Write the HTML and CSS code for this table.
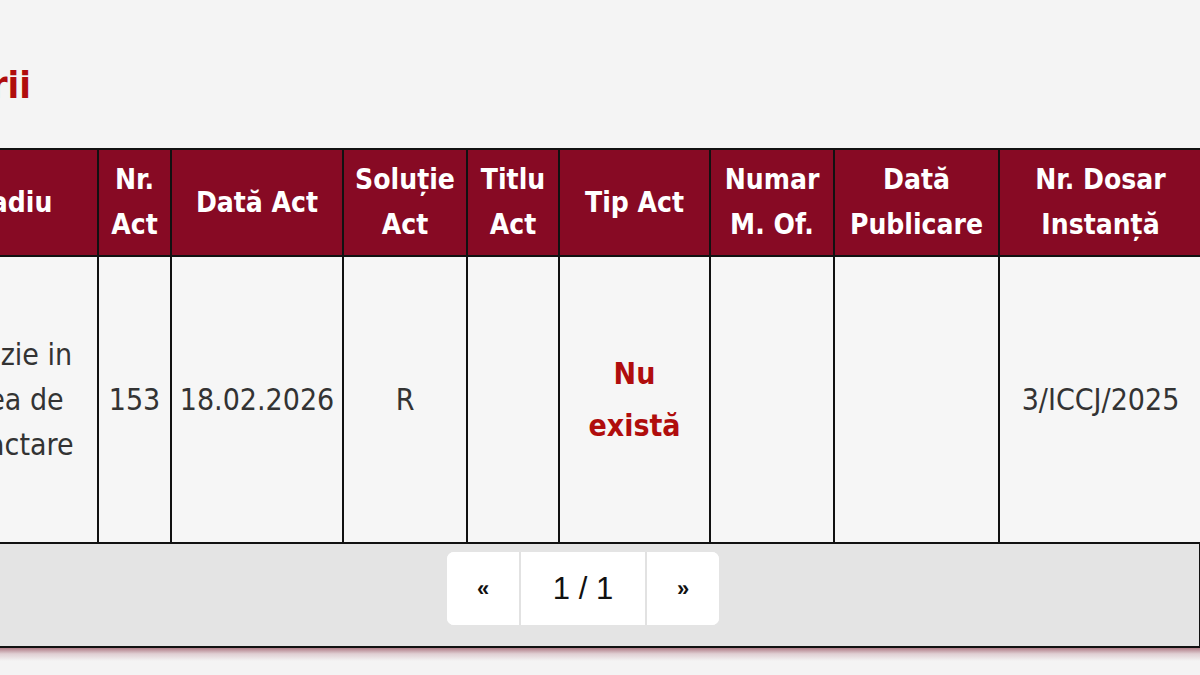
FILE: index.html
```html
<!DOCTYPE html>
<html lang="ro">
<head>
<meta charset="utf-8">
<title>Stadiul sesizării</title>
<link rel="stylesheet" href="styles.css">
</head>
<body>
<div class="page">
  <div class="title-wrap"><h2 class="title">Stadiul sesizării</h2></div>
  <div class="panel">
    <table class="acts">
      <colgroup>
        <col class="c1"><col class="c2"><col class="c3"><col class="c4"><col class="c5">
        <col class="c6"><col class="c7"><col class="c8"><col class="c9">
      </colgroup>
      <thead>
        <tr>
          <th>Stadiu</th>
          <th>Nr. Act</th>
          <th>Dată Act</th>
          <th>Soluție Act</th>
          <th>Titlu Act</th>
          <th>Tip Act</th>
          <th>Numar M.&nbsp;Of.</th>
          <th>Dată Publicare</th>
          <th>Nr. Dosar Instanță</th>
        </tr>
      </thead>
      <tbody>
        <tr>
          <td>Decizie in calea de retractare</td>
          <td>153</td>
          <td>18.02.2026</td>
          <td>R</td>
          <td></td>
          <td><span class="missing">Nu există</span></td>
          <td></td>
          <td></td>
          <td>3/ICCJ/2025</td>
        </tr>
      </tbody>
    </table>
    <div class="pager-bar">
      <div class="pager">
        <button class="pg-btn pg-arrow" type="button">«</button>
        <span class="pg-btn pg-current">1 / 1</span>
        <button class="pg-btn pg-arrow" type="button">»</button>
      </div>
    </div>
  </div>
  <div class="panel-shadow"></div>
</div>
</body>
</html>
```

FILE: styles.css
```css
html {
  overflow: hidden;
  background: #f4f4f4;
}

body {
  margin: 0;
  padding: 0;
  min-height: 675px;
  background: #f4f4f4;
}

.page {
  margin-left: -86px;
  width: 1287px;
  font-family: "DejaVu Sans Condensed", "DejaVu Sans", sans-serif;
  font-stretch: condensed;
}

.title-wrap {
  width: 365px;
  margin-left: -248px;
  text-align: right;
  white-space: nowrap;
  padding-top: 62px;
  margin-bottom: 40px;
}

.title {
  margin: 0;
  font-size: 38px;
  line-height: 46px;
  font-weight: bold;
  color: #b00d0d;
}

.acts {
  width: 1287px;
  table-layout: fixed;
  border-collapse: collapse;
  border: 2px solid #111;
  background: #f6f6f6;
}

.c1 { width: 183px; }
.c2 { width: 73px; }
.c3 { width: 172px; }
.c4 { width: 124px; }
.c5 { width: 92px; }
.c6 { width: 151px; }
.c7 { width: 124px; }
.c8 { width: 165px; }
.c9 { width: 203px; }

.acts th,
.acts td {
  border: 2px solid #111;
  text-align: center;
  vertical-align: middle;
}

.acts th {
  background: #870a24;
  color: #fff;
  font-size: 28px;
  font-weight: bold;
  line-height: 45px;
  padding: 7px 3px 8px;
}

.acts td {
  color: #333;
  font-size: 30px;
  line-height: 45px;
  padding: 75px 4px;
}

.missing {
  display: block;
  color: #b00d0d;
  font-weight: bold;
  line-height: 52px;
}

.pager-bar {
  display: flex;
  justify-content: center;
  padding: 8px 0 21px 51px;
  background: #e4e4e4;
  border: 2px solid #111;
  border-top: 0;
}

.panel-shadow {
  height: 13px;
  background: linear-gradient(to bottom, rgba(120, 25, 45, 0.55), rgba(150, 70, 90, 0.22) 45%, rgba(244, 244, 244, 0));
}

.pager {
  display: flex;
  background: #fff;
  border-radius: 7px;
  overflow: hidden;
}

.pg-btn {
  display: flex;
  align-items: center;
  justify-content: center;
  height: 73px;
  background: #fff;
  border: 0;
  margin: 0;
  padding: 0;
  font-family: "Liberation Sans", Arial, sans-serif;
  color: #111;
}

.pg-arrow {
  width: 72px;
  font-size: 22px;
  font-weight: bold;
}

.pg-current {
  width: 124px;
  font-size: 31px;
  border-left: 2px solid #e2e2e2;
  border-right: 2px solid #e2e2e2;
}
```
